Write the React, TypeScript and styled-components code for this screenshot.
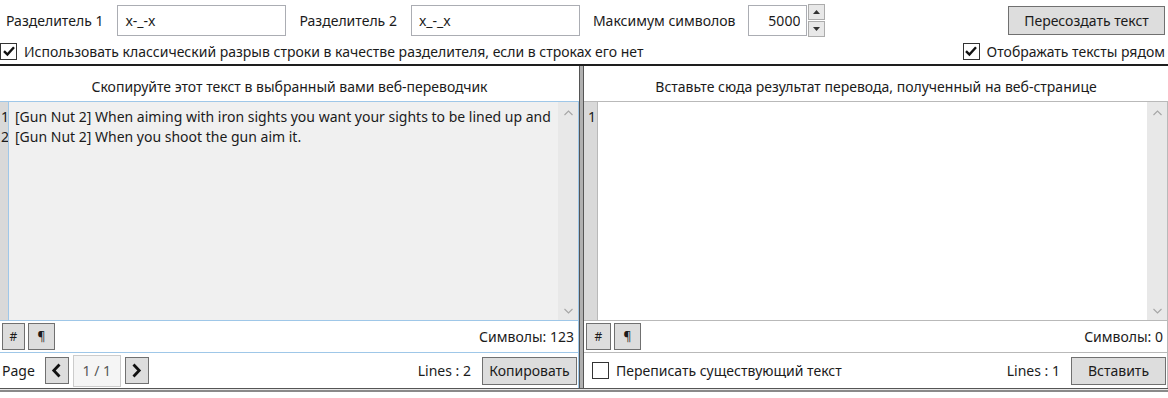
import styled, { createGlobalStyle } from 'styled-components';

const GlobalStyle = createGlobalStyle`
  html, body {
    margin: 0;
    padding: 0;
    background: #ffffff;
  }
  * {
    box-sizing: border-box;
  }
`;

const FOCUS = '#9fc7e8';
const IDLE = '#b9b9b9';

function Check({ checked }: { checked: boolean }) {
  return (
    <CheckBox>
      {checked && (
        <svg width="14" height="14" viewBox="0 0 14 14" aria-hidden="true">
          <path d="M2 7.2 L5.4 10.6 L12 3.2" fill="none" stroke="#111" strokeWidth="2.4" />
        </svg>
      )}
    </CheckBox>
  );
}

function Chevron({ dir }: { dir: 'up' | 'down' }) {
  return (
    <svg width="9" height="6" viewBox="0 0 9 6" aria-hidden="true">
      <path
        d={dir === 'up' ? 'M0.5 5 L4.5 1 L8.5 5' : 'M0.5 1 L4.5 5 L8.5 1'}
        fill="none"
        stroke="#a6a6a6"
        strokeWidth="1.1"
      />
    </svg>
  );
}

function Arrow({ dir }: { dir: 'left' | 'right' }) {
  return (
    <svg width="11" height="15" viewBox="0 0 11 15" aria-hidden="true">
      <path
        d={dir === 'left' ? 'M8.5 1.5 L2.8 7.5 L8.5 13.5' : 'M2.5 1.5 L8.2 7.5 L2.5 13.5'}
        fill="none"
        stroke="#111"
        strokeWidth="2.8"
      />
    </svg>
  );
}

interface EditorPaneProps {
  title: string;
  lines: string[];
  focused: boolean;
  gutter: number;
  count: number;
  footer: React.ReactNode;
}

function EditorPane({ title, lines, focused, gutter, count, footer }: EditorPaneProps) {
  const line = focused ? FOCUS : IDLE;
  return (
    <Pane $fixed={focused}>
      <PaneHeader>{title}</PaneHeader>
      <PaneBody $line={line}>
        <Editor $line={line}>
          <Gutter $width={gutter} $line={line} $inset={focused ? 1 : 4}>
            {(lines.length ? lines : ['']).map((_, i) => (
              <div key={i}>{i + 1}</div>
            ))}
          </Gutter>
          <TextArea $readOnly={focused}>
            {lines.map((l, i) => (
              <div key={i}>{l}</div>
            ))}
          </TextArea>
          <ScrollBar>
            <Chevron dir="up" />
            <Chevron dir="down" />
          </ScrollBar>
        </Editor>
        <Toolbar $line={line}>
          <ToolButton $width={focused ? 23 : 25}>#</ToolButton>
          <ToolButton $width={27}>¶</ToolButton>
          <Counter>Символы: {count}</Counter>
        </Toolbar>
        <Footer>{footer}</Footer>
      </PaneBody>
    </Pane>
  );
}

export default function App() {
  return (
    <>
      <GlobalStyle />
      <Window>
        <TopBar>
          <FieldLabel>Разделитель 1</FieldLabel>
          <TextInput defaultValue="x-_-x" />
          <FieldLabel>Разделитель 2</FieldLabel>
          <TextInput defaultValue="x_-_x" />
          <FieldLabel>Максимум символов</FieldLabel>
          <NumberField>
            <NumberInput defaultValue="5000" />
            <Spinner>
              <SpinStep>
                <svg width="7" height="4" viewBox="0 0 7 4" aria-hidden="true">
                  <path d="M0 4 L3.5 0 L7 4 Z" fill="#333" />
                </svg>
              </SpinStep>
              <SpinStep>
                <svg width="7" height="4" viewBox="0 0 7 4" aria-hidden="true">
                  <path d="M0 0 L3.5 4 L7 0 Z" fill="#333" />
                </svg>
              </SpinStep>
            </Spinner>
          </NumberField>
          <WideButton>Пересоздать текст</WideButton>
        </TopBar>

        <OptionsRow>
          <CheckOption>
            <Check checked />
            Использовать классический разрыв строки в качестве разделителя, если в строках его нет
          </CheckOption>
          <CheckOption>
            <Check checked />
            Отображать тексты рядом
          </CheckOption>
        </OptionsRow>

        <Panes>
          <EditorPane
            title="Скопируйте этот текст в выбранный вами веб-переводчик"
            focused
            gutter={9}
            count={123}
            lines={[
              '[Gun Nut 2] When aiming with iron sights you want your sights to be lined up and',
              '[Gun Nut 2] When you shoot the gun aim it.',
            ]}
            footer={
              <>
                <span>Page</span>
                <NavButton $gap={10}>
                  <Arrow dir="left" />
                </NavButton>
                <PageBox>1 / 1</PageBox>
                <NavButton $gap={0}>
                  <Arrow dir="right" />
                </NavButton>
                <LinesLabel>Lines : 2</LinesLabel>
                <ActionButton>Копировать</ActionButton>
              </>
            }
          />
          <Splitter />
          <EditorPane
            title="Вставьте сюда результат перевода, полученный на веб-странице"
            focused={false}
            gutter={14}
            count={0}
            lines={[]}
            footer={
              <>
                <CheckOption $indent={6}>
                  <Check checked={false} />
                  Переписать существующий текст
                </CheckOption>
                <LinesLabel>Lines : 1</LinesLabel>
                <ActionButton>Вставить</ActionButton>
              </>
            }
          />
        </Panes>
        <BottomEdge />
      </Window>
    </>
  );
}

const Window = styled.div`
  width: 1168px;
  height: 398px;
  display: flex;
  flex-direction: column;
  overflow: hidden;
  background: #ffffff;
  color: #1b1b1b;
  font-family: 'Noto Sans', 'Open Sans', sans-serif;
  font-size: 14px;
`;

const TopBar = styled.div`
  height: 40px;
  display: flex;
  align-items: center;
  padding: 0 3px 0 6px;
`;

const FieldLabel = styled.span`
  margin-right: 14px;
  white-space: nowrap;
`;

const TextInput = styled.input`
  width: 169px;
  height: 31px;
  margin: 0 13px 0 0;
  padding: 0 7px;
  border: 1px solid #abadb3;
  background: #ffffff;
  color: #1b1b1b;
  font: inherit;
  outline: none;
`;

const NumberField = styled.div`
  display: flex;
  align-items: flex-start;
  height: 33px;
  margin-left: -1px;
`;

const NumberInput = styled.input`
  width: 59px;
  height: 31px;
  margin-top: 1px;
  padding: 0 6px 0 0;
  border: 1px solid #abadb3;
  background: #ffffff;
  color: #1b1b1b;
  font: inherit;
  text-align: right;
  outline: none;
`;

const Spinner = styled.div`
  width: 17px;
  height: 33px;
  display: grid;
  grid-template-rows: 1fr 1fr;
  gap: 1px;
  margin-left: 1px;
`;

const SpinStep = styled.div`
  display: flex;
  align-items: center;
  justify-content: center;
  border: 1px solid #acacac;
  background: #e8e8e8;
`;

const WideButton = styled.button`
  width: 157px;
  height: 29px;
  margin-left: auto;
  border: 1px solid #707070;
  background: #dddddd;
  color: #1b1b1b;
  font: inherit;
  padding: 0;
`;

const OptionsRow = styled.div`
  height: 26px;
  display: flex;
  align-items: center;
  justify-content: space-between;
  padding: 0 3px 2px 0;
  border-bottom: 2px solid #1e1e1e;
`;

const CheckOption = styled.label<{ $indent?: number }>`
  display: inline-flex;
  align-items: center;
  gap: 7px;
  margin-left: ${(p) => p.$indent ?? 0}px;
  white-space: nowrap;
`;

const CheckBox = styled.span`
  width: 17px;
  height: 17px;
  display: inline-flex;
  align-items: center;
  justify-content: center;
  border: 1px solid #333333;
  background: #ffffff;
`;

const Panes = styled.div`
  height: 322px;
  display: flex;
`;

const Pane = styled.section<{ $fixed: boolean }>`
  flex: ${(p) => (p.$fixed ? '0 0 579px' : '1')};
  min-width: 0;
  display: flex;
  flex-direction: column;
`;

const PaneHeader = styled.div`
  height: 35px;
  padding-top: 11px;
  text-align: center;
  white-space: nowrap;
`;

const PaneBody = styled.div<{ $line: string }>`
  flex: 1;
  display: flex;
  flex-direction: column;
  border-right: 1px solid ${(p) => p.$line};
`;

const Editor = styled.div<{ $line: string }>`
  height: 220px;
  display: flex;
  border-top: 1px solid ${(p) => p.$line};
  border-bottom: 1px solid ${(p) => p.$line};
`;

const Gutter = styled.div<{ $width: number; $line: string; $inset: number }>`
  flex: 0 0 ${(p) => p.$width}px;
  overflow: hidden;
  padding: 5px 0 0 ${(p) => p.$inset}px;
  background: #d9d9d9;
  border-right: 1px solid ${(p) => p.$line};
  line-height: 20px;
`;

const TextArea = styled.div<{ $readOnly: boolean }>`
  flex: 1;
  min-width: 0;
  overflow: hidden;
  padding: 5px 0 0 6px;
  background: ${(p) => (p.$readOnly ? '#f0f0f0' : '#ffffff')};
  line-height: 20px;
  white-space: pre;
`;

const ScrollBar = styled.div`
  flex: 0 0 20px;
  display: flex;
  flex-direction: column;
  align-items: center;
  justify-content: space-between;
  padding: 8px 0 6px;
  background: #e8e8e8;
`;

const Toolbar = styled.div<{ $line: string }>`
  height: 32px;
  display: flex;
  align-items: center;
  gap: 3px;
  padding: 0 4px 1px 2px;
  border-bottom: 1px solid ${(p) => p.$line};
`;

const ToolButton = styled.button<{ $width: number }>`
  width: ${(p) => p.$width}px;
  height: 27px;
  padding: 0;
  border: 1px solid #707070;
  background: #dddddd;
  color: #1b1b1b;
  font: inherit;
  font-size: 12px;
`;

const Counter = styled.span`
  margin-left: auto;
`;

const Footer = styled.div`
  height: 35px;
  display: flex;
  align-items: center;
  padding: 0 1px 0 2px;
`;

const NavButton = styled.button<{ $gap: number }>`
  width: 24px;
  height: 27px;
  margin-left: ${(p) => p.$gap}px;
  display: flex;
  align-items: center;
  justify-content: center;
  padding: 0;
  border: 1px solid #707070;
  background: #dddddd;
`;

const PageBox = styled.span`
  width: 48px;
  height: 32px;
  margin: 0 4px;
  display: flex;
  align-items: center;
  justify-content: center;
  border: 1px solid #cccccc;
  background: #f5f5f5;
  color: #555555;
`;

const LinesLabel = styled.span`
  margin: 0 11px 0 auto;
`;

const ActionButton = styled.button`
  width: 95px;
  height: 28px;
  padding: 0;
  border: 1px solid #707070;
  background: #dddddd;
  color: #1b1b1b;
  font: inherit;
`;

const Splitter = styled.div`
  flex: 0 0 5px;
  border-left: 1.5px solid #555555;
  border-right: 1.5px solid #555555;
  background: #b0b0b0;
`;

const BottomEdge = styled.div`
  height: 4px;
  border-top: 1px solid #555555;
  border-bottom: 2px solid #8a8a8a;
  background: #e6e6e6;
`;
